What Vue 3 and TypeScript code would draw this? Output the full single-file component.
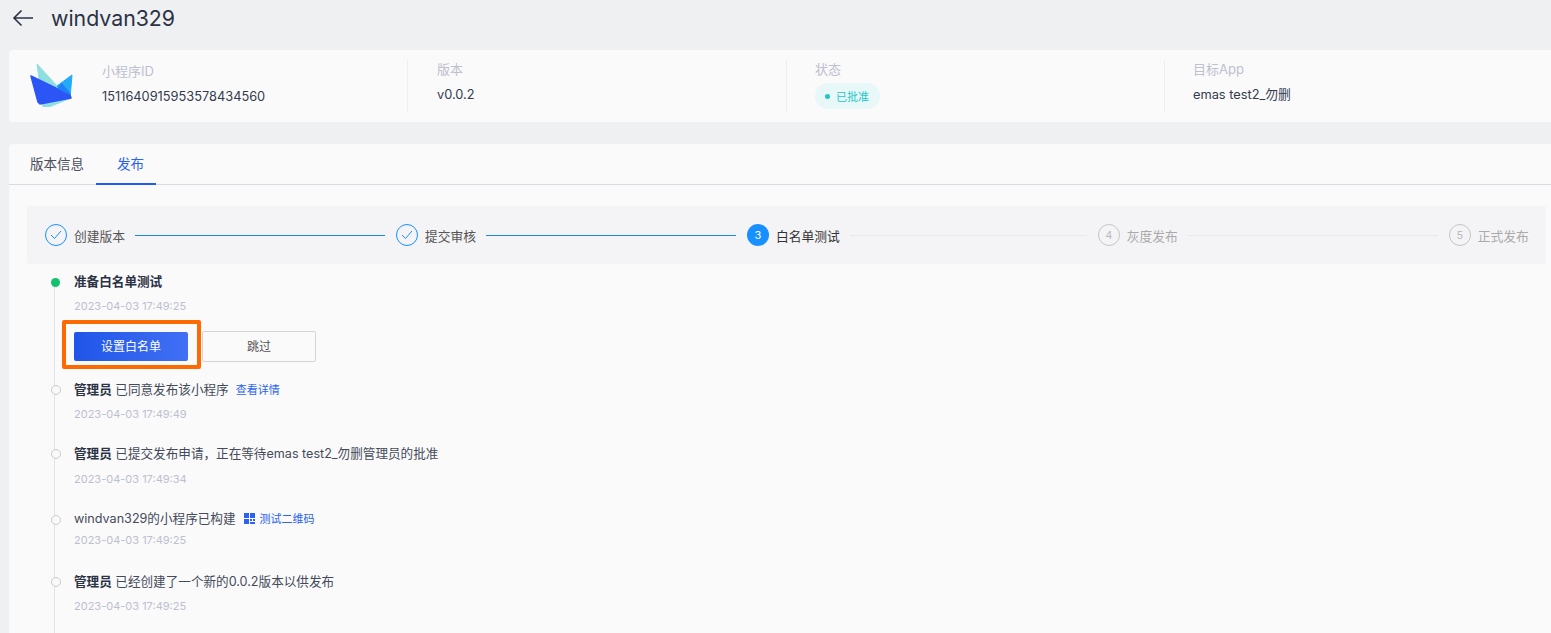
<template>
  <div class="page">
    <header class="head">
      <svg class="back" width="22" height="18" viewBox="0 0 22 18" fill="none" stroke="#2b3245" stroke-width="1.6">
        <path d="M21 9H2M9.5 1.5 2 9l7.5 7.5" />
      </svg>
      <span class="title">windvan329</span>
    </header>

    <section class="info">
      <svg class="logo" width="43" height="44" viewBox="0 0 43 44">
        <path d="M7 1 28 24 41 35 19 44 13 44Z" fill="#8fdfe0" stroke="#8fdfe0" stroke-linejoin="round" />
        <path d="M42 12 27 23 40 35Z" fill="#22a9f8" stroke="#22a9f8" stroke-linejoin="round" />
        <path d="M1 13 40 32 41 35 10 41 8 39Z" fill="#2b55f5" stroke="#2b55f5" stroke-width="1.5" stroke-linejoin="round" />
        <path d="M27 25.5 31.5 20 40 29.5 40 32Z" fill="#1f7ff6" />
      </svg>
      <div v-for="f in fields" :key="f.label" class="field" :class="f.cls">
        <div class="label">{{ f.label }}</div>
        <div v-if="f.tag" class="tag"><i></i>{{ f.value }}</div>
        <div v-else class="value">{{ f.value }}</div>
      </div>
    </section>

    <section class="panel">
      <nav class="tabs">
        <a class="tab">版本信息</a>
        <a class="tab on">发布</a>
      </nav>
      <div class="body">
        <div class="steps">
          <template v-for="(s, i) in steps" :key="s.name">
            <div class="step" :class="s.state">
              <span class="circle">
                <svg v-if="s.state === 'done'" width="12" height="10" viewBox="0 0 12 10" fill="none" stroke="#1890ff" stroke-width="1">
                  <path d="M1 5l3.5 3.5L11 1" />
                </svg>
                <template v-else>{{ i + 1 }}</template>
              </span>
              <span class="name">{{ s.name }}</span>
            </div>
            <div v-if="i < steps.length - 1" class="line" :class="s.state" :style="{ width: s.line + 'px' }"></div>
          </template>
        </div>

        <ul class="timeline">
          <li class="item first">
            <span class="dot green"></span>
            <div class="text"><b>准备白名单测试</b></div>
            <div class="time">2023-04-03 17:49:25</div>
            <div class="actions">
              <button class="btn primary">设置白名单</button>
              <button class="btn plain">跳过</button>
              <span class="mark"></span>
            </div>
          </li>
          <li class="item a">
            <span class="dot"></span>
            <div class="text"><b>管理员</b> 已同意发布该小程序<a class="link">查看详情</a></div>
            <div class="time">2023-04-03 17:49:49</div>
          </li>
          <li class="item b">
            <span class="dot"></span>
            <div class="text"><b>管理员</b> 已提交发布申请，正在等待emas test2_勿删管理员的批准</div>
            <div class="time">2023-04-03 17:49:34</div>
          </li>
          <li class="item c">
            <span class="dot"></span>
            <div class="text">windvan329的小程序已构建<a class="link qr"><svg width="11" height="11" viewBox="0 0 11 11" fill="#2b62f0">
                  <path d="M0 0h5v5H0zM6 0h5v5H6zM0 6h5v5H0zM6 6h2v2H6zM9 6h2v2H9zM6 9h5v2H6z" />
                </svg>测试二维码</a></div>
            <div class="time">2023-04-03 17:49:25</div>
          </li>
          <li class="item d">
            <span class="dot"></span>
            <div class="text"><b>管理员</b> 已经创建了一个新的0.0.2版本以供发布</div>
            <div class="time">2023-04-03 17:49:25</div>
          </li>
        </ul>
      </div>
    </section>
  </div>
</template>

<script setup lang="ts">
interface Field {
  label: string;
  value: string;
  cls: string;
  tag?: boolean;
}
interface Step {
  name: string;
  state: "done" | "current" | "todo";
  line: number;
}
const fields: Field[] = [
  { label: "小程序ID", value: "1511640915953578434560", cls: "f1" },
  { label: "版本", value: "v0.0.2", cls: "f2" },
  { label: "状态", value: "已批准", cls: "f3", tag: true },
  { label: "目标App", value: "emas test2_勿删", cls: "f4" },
];
const steps: Step[] = [
  { name: "创建版本", state: "done", line: 250 },
  { name: "提交审核", state: "done", line: 250 },
  { name: "白名单测试", state: "current", line: 237 },
  { name: "灰度发布", state: "todo", line: 250 },
  { name: "正式发布", state: "todo", line: 0 },
];
</script>

<style>
html,
body {
  margin: 0;
  background: #eff0f2;
}
</style>

<style scoped>
.page {
  height: 633px;
  overflow: hidden;
  padding-left: 9px;
  box-sizing: border-box;
  background: #eff0f2;
  font-family: "Inter", "Noto Sans CJK SC", sans-serif;
  font-size: 12px;
  color: #333b4f;
}
.head {
  height: 50px;
  display: flex;
  align-items: flex-start;
  padding-top: 3px;
  box-sizing: border-box;
  margin-left: -9px;
}
.back {
  margin: 6px 0 0 12px;
}
.title {
  margin-left: 17px;
  font-size: 21.3px;
  line-height: 30px;
  color: #2b3245;
}
.info {
  height: 72px;
  background: #fafafa;
  border-radius: 4px 0 0 4px;
  display: flex;
  align-items: center;
  margin-bottom: 22px;
}
.logo {
  margin-left: 21px;
  margin-right: 29px;
  flex: none;
  transform: translateY(-1px);
}
.field {
  height: 52px;
  box-sizing: border-box;
  flex: none;
}
.f1 {
  width: 306px;
  border-right: 1px solid #eeeff2;
}
.f2 {
  width: 379px;
  padding-left: 29px;
  border-right: 1px solid #eeeff2;
}
.f3 {
  width: 378px;
  padding-left: 28px;
  border-right: 1px solid #eeeff2;
}
.f4 {
  padding-left: 28px;
}
.label {
  font-size: 13px;
  line-height: 18px;
  color: #bcc0cf;
}
.value {
  font-size: 12.8px;
  line-height: 18px;
  margin-top: 8px;
  color: #333b4f;
}
.f1 .label {
  margin-top: 2px;
}
.tag {
  display: inline-flex;
  align-items: center;
  height: 26px;
  padding: 0 11px 0 10px;
  border-radius: 13px;
  background: #e8f8f8;
  color: #23c6c8;
  font-size: 11px;
  margin-top: 5px;
}
.tag i {
  width: 5px;
  height: 5px;
  border-radius: 50%;
  background: #23c6c8;
  margin-right: 6px;
}
.panel {
  background: #fafafa;
  border-radius: 4px 0 0 0;
  height: 489px;
}
.tabs {
  height: 41px;
  box-sizing: border-box;
  border-bottom: 1px solid #d9dbe2;
  display: flex;
}
.tab {
  height: 41px;
  line-height: 40px;
  font-size: 13.5px;
  padding: 0 12px 0 21px;
  color: #4a4f5c;
  box-sizing: border-box;
}
.tab.on {
  color: #2b62f0;
  border-bottom: 2px solid #1f5bf0;
}
.body {
  padding: 21px 5px 0 18px;
}
.steps {
  height: 58px;
  background: #f4f4f6;
  border-radius: 2px;
  display: flex;
  align-items: center;
  padding-left: 18px;
}
.step {
  display: flex;
  align-items: center;
  flex: none;
}
.circle {
  width: 20px;
  height: 20px;
  border-radius: 50%;
  display: flex;
  align-items: center;
  justify-content: center;
  font-size: 11px;
  flex: none;
  margin-right: 7px;
}
.done .circle {
  border: 1px solid #1890ff;
}
.current .circle {
  width: 22px;
  height: 22px;
  background: #1890ff;
  color: #fff;
}
.todo .circle {
  border: 1px solid #c6c6c6;
  color: #bbb;
}
.name {
  font-size: 12.75px;
  color: #555;
  white-space: nowrap;
}
.current .name {
  color: #333;
}
.todo .name {
  color: #aaa;
}
.line {
  height: 1px;
  flex: none;
  margin: 0 11px 0 10px;
}
.line.done {
  background: #1d86e6;
}
.line.current,
.line.todo {
  background: #e8e8ea;
}
.timeline {
  list-style: none;
  margin: 0;
  padding: 0 0 0 47px;
  position: relative;
}
.timeline::before {
  content: "";
  position: absolute;
  left: 27px;
  top: 20px;
  bottom: -100px;
  width: 1px;
  background: #e3e4e8;
}
.item {
  position: relative;
}
.dot {
  position: absolute;
  left: -23px;
  top: 5px;
  width: 8px;
  height: 8px;
  border-radius: 50%;
  border: 1px solid #c9cad0;
  background: #fafafa;
}
.dot.green {
  left: -23px;
  width: 9px;
  height: 9px;
  border: 0;
  background: #12c26d;
}
.text {
  font-size: 12.6px;
  line-height: 20px;
  color: #444a5a;
  white-space: nowrap;
}
.text b {
  font-weight: 600;
  color: #2b3245;
}
.time {
  font-size: 11px;
  line-height: 16px;
  color: #bcc0cf;
  margin-top: 6px;
}
.first {
  padding-top: 8px;
  height: 116px;
  box-sizing: border-box;
}
.first .dot {
  top: 14px;
}
.a {
  height: 64px;
}
.b {
  height: 65px;
}
.b .time {
  margin-top: 7px;
}
.c {
  height: 63px;
}
.c .dot {
  top: 6px;
}
.c .time {
  margin-top: 3px;
}
.d {
  height: 65px;
}
.link {
  color: #2b62f0;
  font-size: 11px;
  margin-left: 7px;
}
.qr {
  margin-left: 8px;
}
.qr svg {
  vertical-align: -1px;
  margin-right: 5px;
}
.actions {
  display: flex;
  align-items: center;
  position: relative;
  margin-top: 17px;
}
.btn {
  height: 29px;
  width: 114px;
  border-radius: 2px;
  font-family: inherit;
  font-size: 12px;
  padding: 0 0 2px;
}
.primary {
  border: 0;
  color: #fff;
  background: linear-gradient(90deg, #1f55e8, #4170f5);
}
.plain {
  height: 31px;
  margin-left: 14px;
  background: #fafafa;
  border: 1px solid #d4d4d4;
  color: #555;
}
.mark {
  position: absolute;
  left: -12px;
  top: -11px;
  width: 131px;
  height: 41px;
  border: 4px solid #ff6a00;
  border-radius: 2px;
}
</style>
